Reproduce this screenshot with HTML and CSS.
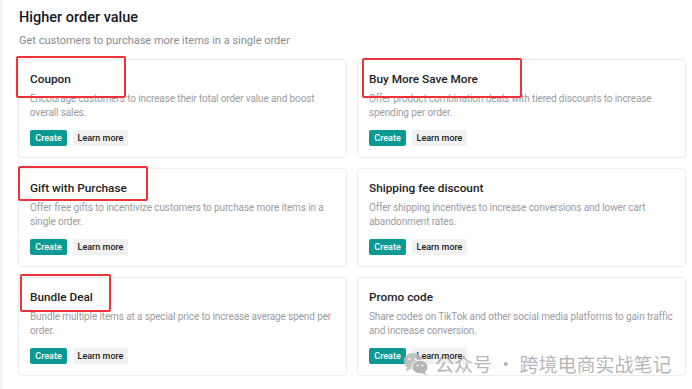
FILE: index.html
```html
<!DOCTYPE html>
<html lang="en">
<head>
  <meta charset="UTF-8" />
  <meta name="viewport" content="width=device-width, initial-scale=1.0" />
  <title>Higher order value</title>
  <link rel="stylesheet" href="styles.css">
</head>
<body>
  <main class="page">
    <h1 class="section-title">Higher order value</h1>
    <p class="section-sub">Get customers to purchase more items in a single order</p>

    <div class="tools">
      <div class="tool">
        <h2 class="tool-name marked">Coupon</h2>
        <p class="tool-desc">Encourage customers to increase their total order value and boost overall sales.</p>
        <div class="actions">
          <button class="btn btn-primary">Create</button>
          <button class="btn btn-plain">Learn more</button>
        </div>
      </div>

      <div class="tool">
        <h2 class="tool-name marked">Buy More Save More</h2>
        <p class="tool-desc">Offer product combination deals with tiered discounts to increase spending per order.</p>
        <div class="actions">
          <button class="btn btn-primary">Create</button>
          <button class="btn btn-plain">Learn more</button>
        </div>
      </div>

      <div class="tool">
        <h2 class="tool-name marked">Gift with Purchase</h2>
        <p class="tool-desc">Offer free gifts to incentivize customers to purchase more items in a single order.</p>
        <div class="actions">
          <button class="btn btn-primary">Create</button>
          <button class="btn btn-plain">Learn more</button>
        </div>
      </div>

      <div class="tool">
        <h2 class="tool-name">Shipping fee discount</h2>
        <p class="tool-desc">Offer shipping incentives to increase conversions and lower cart abandonment rates.</p>
        <div class="actions">
          <button class="btn btn-primary">Create</button>
          <button class="btn btn-plain">Learn more</button>
        </div>
      </div>

      <div class="tool">
        <h2 class="tool-name marked">Bundle Deal</h2>
        <p class="tool-desc">Bundle multiple items at a special price to increase average spend per order.</p>
        <div class="actions">
          <button class="btn btn-primary">Create</button>
          <button class="btn btn-plain">Learn more</button>
        </div>
      </div>

      <div class="tool">
        <h2 class="tool-name">Promo code</h2>
        <p class="tool-desc">Share codes on TikTok and other social media platforms to gain traffic and increase conversion.</p>
        <div class="actions">
          <button class="btn btn-primary">Create</button>
          <button class="btn btn-plain">Learn more</button>
        </div>
      </div>
    </div>
  </main>

  <!-- watermark over the last card -->
  <div class="watermark">
    <svg class="wm-icon" viewBox="0 0 26 24" width="26" height="24">
      <ellipse cx="10" cy="9" rx="9.5" ry="8" fill="#b9b9b9"/>
      <path d="M4 15 L3 19.5 L8.5 16.5 Z" fill="#b9b9b9"/>
      <ellipse cx="17" cy="15" rx="8" ry="6.8" fill="#a9a9a9" stroke="#fff" stroke-width="1"/>
      <path d="M21.5 19.5 L23.5 23 L18 21 Z" fill="#a9a9a9"/>
      <circle cx="6.5" cy="7" r="1.1" fill="#fff"/>
      <circle cx="12.5" cy="7" r="1.1" fill="#fff"/>
      <circle cx="14.5" cy="13.5" r="0.9" fill="#fff"/>
      <circle cx="19.5" cy="13.5" r="0.9" fill="#fff"/>
    </svg>
    <span class="wm-text">公众号 · 跨境电商实战笔记</span>
  </div>
</body>
</html>
```

FILE: styles.css
```css
* {
  margin: 0;
  padding: 0;
  box-sizing: border-box;
}

body {
  font-family: 'Roboto', 'Noto Sans', sans-serif;
  background: #fff;
  color: #161823;
  width: 692px;
  height: 389px;
  overflow: hidden;
  position: relative;
}

.page {
  border-left: 3px solid #f3f3f3;
  height: 100%;
  padding: 8px 6px 0 15px;
}

.section-title {
  font-size: 14.5px;
  font-weight: 500;
  line-height: 20px;
  padding-left: 1px;
}

.section-sub {
  font-size: 11px;
  color: #8a8b91;
  line-height: 17px;
  margin-top: 4px;
  padding-left: 1px;
}

.tools {
  display: grid;
  grid-template-columns: 329px 329px;
  grid-auto-rows: 99px;
  column-gap: 10px;
  row-gap: 10px;
  margin-top: 10px;
}

.tool {
  border: 1px solid #ececec;
  border-radius: 4px;
  padding: 11px 11px 0 11px;
  display: flex;
  flex-direction: column;
}

.tool-name {
  font-size: 11.8px;
  font-weight: 500;
  line-height: 16px;
  color: #222;
  position: relative;
}

.tool-desc {
  font-size: 10px;
  letter-spacing: -0.12px;
  color: #9b9ca1;
  line-height: 13.5px;
  margin-top: 5px;
  height: 27px;
}

.actions {
  display: flex;
  gap: 6px;
  margin-top: 11px;
}

.btn {
  font-family: inherit;
  font-size: 9px;
  font-weight: 500;
  height: 16px;
  border: none;
  border-radius: 2px;
  padding: 0;
}

.btn-primary {
  background: #0a9a93;
  color: #fff;
  width: 37px;
}

.btn-plain {
  background: #f1f1f2;
  color: #222;
  width: 55px;
}

/* red annotation boxes drawn over the titles */
.marked::after {
  content: "";
  position: absolute;
  border: 2px solid #ee3338;
  border-radius: 2px;
}

.tools .tool:nth-child(1) .marked::after {
  left: -14px;
  top: -15px;
  width: 106px;
  height: 38px;
}

.tools .tool:nth-child(2) .marked::after {
  left: -7px;
  top: -13px;
  width: 156px;
  height: 36px;
}

.tools .tool:nth-child(3) .marked::after {
  left: -12px;
  top: -14px;
  width: 126px;
  height: 31px;
}

.tools .tool:nth-child(5) .marked::after {
  left: -10px;
  top: -15px;
  width: 87px;
  height: 34px;
}

.watermark {
  position: absolute;
  left: 403px;
  top: 350px;
  display: flex;
  align-items: center;
  gap: 6px;
  pointer-events: none;
}

.wm-icon {
  opacity: 0.85;
}

.wm-text {
  font-family: 'Noto Sans CJK SC', sans-serif;
  font-size: 19px;
  color: rgba(150, 150, 150, 0.7);
}
```
